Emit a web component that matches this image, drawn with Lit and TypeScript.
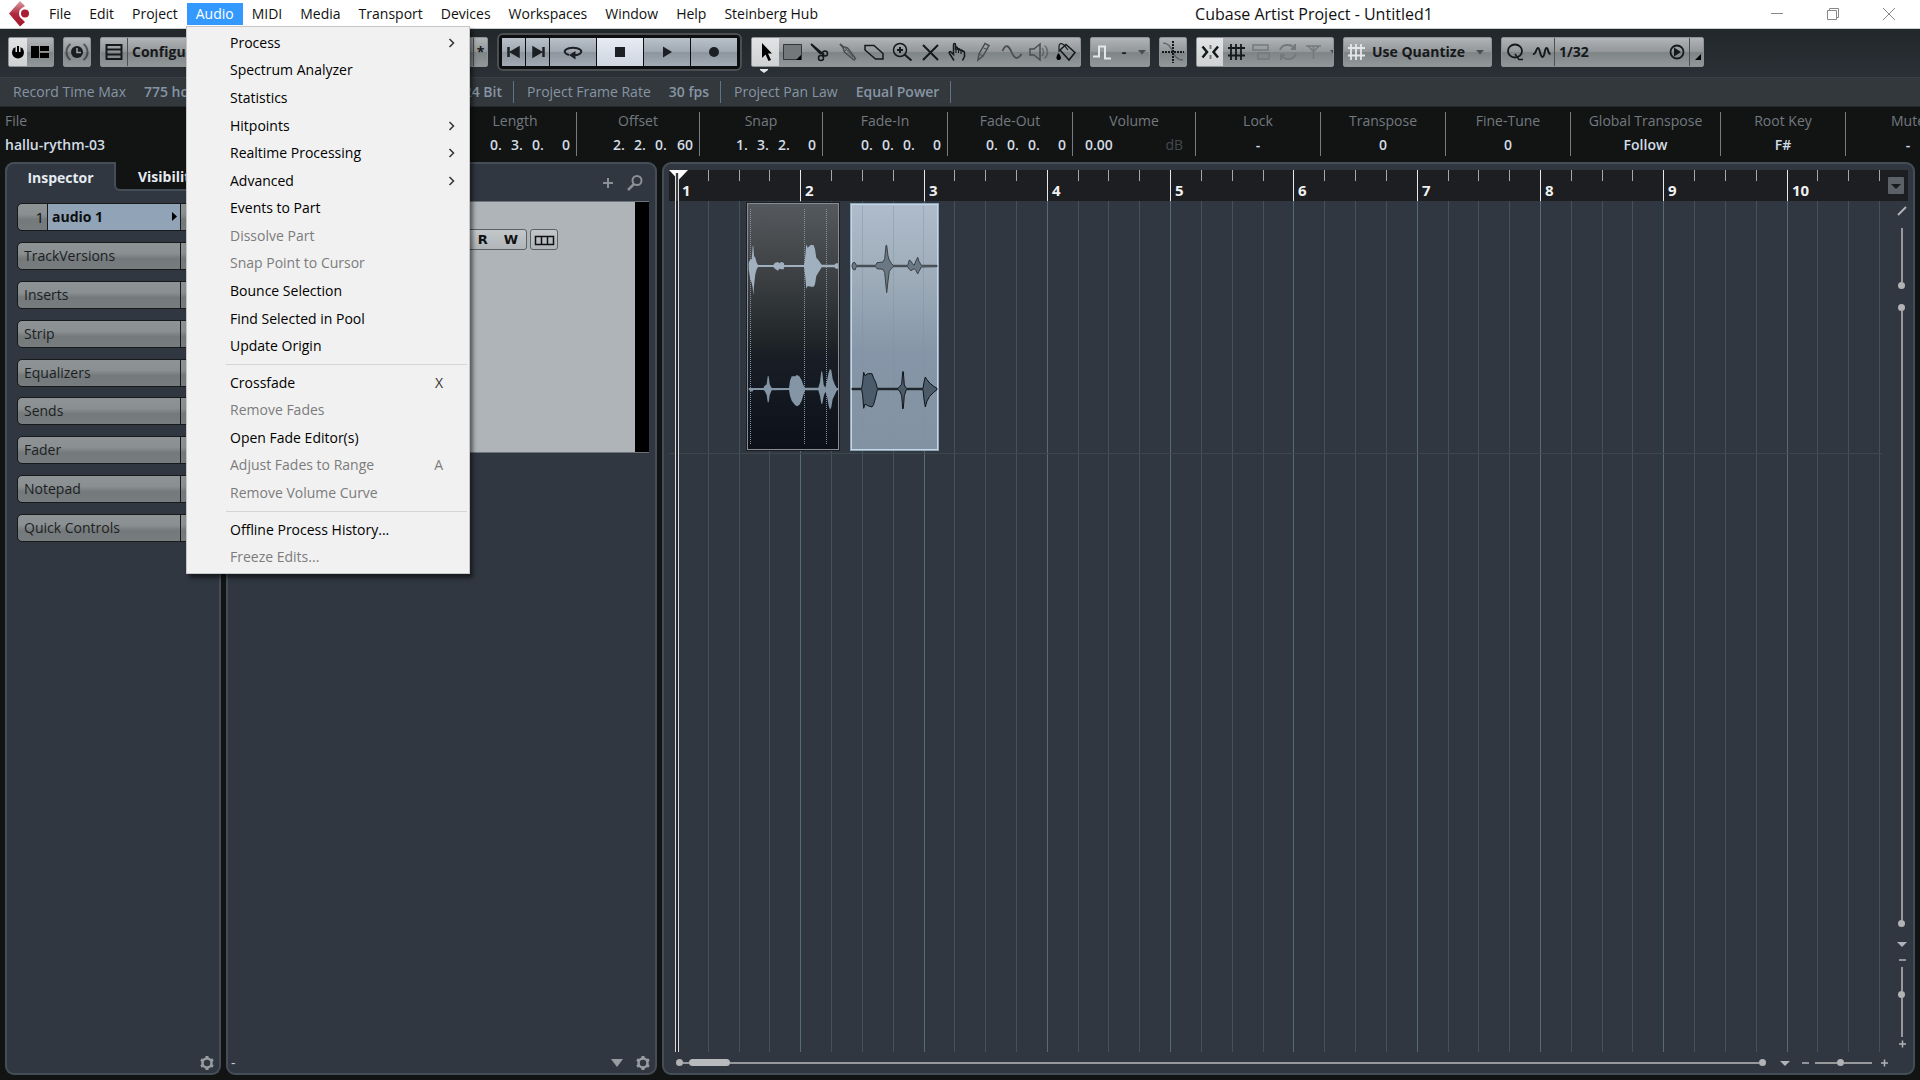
import { LitElement, html, svg, css, nothing } from "lit";
import { customElement } from "lit/decorators.js";
import { classMap } from "lit/directives/class-map.js";

const menus = ["File", "Edit", "Project", "Audio", "MIDI", "Media", "Transport", "Devices", "Workspaces", "Window", "Help", "Steinberg Hub"];

type Entry = { label: string; sub?: boolean; off?: boolean; key?: string } | null;
const audioMenu: Entry[] = [
  { label: "Process", sub: true },
  { label: "Spectrum Analyzer" },
  { label: "Statistics" },
  { label: "Hitpoints", sub: true },
  { label: "Realtime Processing", sub: true },
  { label: "Advanced", sub: true },
  { label: "Events to Part" },
  { label: "Dissolve Part", off: true },
  { label: "Snap Point to Cursor", off: true },
  { label: "Bounce Selection" },
  { label: "Find Selected in Pool" },
  { label: "Update Origin" },
  null,
  { label: "Crossfade", key: "X" },
  { label: "Remove Fades", off: true },
  { label: "Open Fade Editor(s)" },
  { label: "Adjust Fades to Range", key: "A", off: true },
  { label: "Remove Volume Curve", off: true },
  null,
  { label: "Offline Process History..." },
  { label: "Freeze Edits...", off: true },
];

const icon = (body: unknown, w = 24, h = 24) =>
  html`<svg class="ico" width=${w} height=${h} viewBox="0 0 ${w} ${h}" fill="none" stroke="currentColor" stroke-width="1.5" aria-hidden="true">${body}</svg>`;

const I = {
  power: svg`<circle cx="12" cy="12.500" r="6" fill="#000" stroke="none"/><path d="M12 5v7" stroke="#dcdddd" stroke-width="5"/><path d="M12 6v7" stroke="#000" stroke-width="2"/>`,
  layout: svg`<path d="M3 6h8v12H3zM12 6h9v5h-9zM12 13h9v5h-9z" fill="#000" stroke="none"/>`,
  clock: svg`<circle cx="12" cy="12" r="6" fill="#1a1d1f" stroke="none"/><path d="M12 8v4.500h4" stroke="#a2a6a9"/><path d="M5.500 4a10 10 0 0 0 0 16M18.500 4a10 10 0 0 1 0 16" stroke-width="2" opacity=".55"/>`,
  list: svg`<path d="M4.500 5h15v14h-15zM5 9.500h14M5 14.500h14" stroke-width="2"/>`,
  prev: svg`<path d="M6 7v10M7 7v10"/><path d="M17 7v10L8.500 12z" fill="currentColor"/>`,
  next: svg`<path d="M17 7v10M18 7v10"/><path d="M7 7v10l8.500-5z" fill="currentColor"/>`,
  cycle: svg`<path d="M8 15c-4-1-5.500-3.500-3-5.500 3-2.500 11-2.500 14 0 2.500 2 1 4.500-3 5.500h-3" stroke-width="2"/><path d="M14.500 11v8.500L8 15z" fill="currentColor" stroke="none"/>`,
  stop: svg`<path d="M7 7h10v10H7z" fill="currentColor" stroke="none"/>`,
  play: svg`<path d="M8 6.500v11l9-5.500z" fill="currentColor" stroke="none"/>`,
  rec: svg`<circle cx="12" cy="12" r="5" fill="currentColor" stroke="none"/>`,
  arrow: svg`<path d="M8 3v15l3.500-3.500 3 6.500 2.500-1-3-6.500h4z" fill="#000" stroke="none"/>`,
  range: svg`<path d="M2.500 4.500h18v15h-18z" fill="#73787b" stroke="#33373a" stroke-width="1"/><path d="M20 15v5h-5z" fill="#000" stroke="none"/>`,
  scissors: svg`<path d="M3 4l13 11M4 5l9 9" stroke-width="2"/><circle cx="17" cy="13.500" r="2.500"/><circle cx="13" cy="18" r="2.500"/>`,
  glue: svg`<path d="M4 4l3 3" stroke-width="2"/><path d="M6.500 6.500l5 1.500 8 10.500-1.500 1.500-9.500-8z"/><path d="M8 12l4-4M9 8l8 9" stroke-width="1"/>`,
  eraser: svg`<path d="M2 5.500h9l9 8v5.500h-7.500L2 10z"/>`,
  zoom: svg`<circle cx="10" cy="10" r="6.500"/><path d="M10 7v6M7 10h6M14.500 14.500l7 6" stroke-width="2"/>`,
  mute: svg`<path d="M5 5l15 15M20 5L5 20" stroke-width="2"/>`,
  hand: svg`<path d="M9 20.500l-4.500-7c-1-1.500.5-2.500 1.500-1.500l2.500 2.500V5c0-2 2-2 2 0v5-2c0-1.500 2-1.500 2 0v2c0-2 2.500-1.500 2.500 0v1c0-1.500 2.500-1.500 2.500 0v1c0-1.500 2-1 2 .5v4l-2 4"/><path d="M11 7v6M13.500 9v4M16 10v4" stroke-width="1.200"/>`,
  pencil: svg`<path d="M6 20l1-6 6-10.500 4 2L11 16z"/><path d="M7.500 14l3.500 2M11.500 8l4 1.500" stroke-width="1"/>`,
  line: svg`<path d="M2.500 11c3-7 6-6 9 1 3 7 6 8 10 2" stroke-width="1.800"/>`,
  speaker: svg`<path d="M3 9h4l6-5v16l-6-5H3z"/><path d="M15 8c2 2 2 6 0 8M17.500 5.500c4 3 4 10 0 13" opacity=".6"/>`,
  bucket: svg`<path d="M6 10L12 4.500l9 8L15 20z"/><path d="M5 12V6c0-3 3-3 5-1l4 5" stroke-width="1.200"/><path d="M4.500 13c4 5 2.500 7 0 7s-3-3 0-7z" fill="#000" stroke="none"/>`,
  step: svg`<path d="M2 16.500h6v-10h6v12h6" stroke="#e4e6e8" stroke-width="2"/>`,
  caret: svg`<path d="M3 4h8L7 8.500z" fill="currentColor" stroke="none"/>`,
  auto: svg`<path d="M2 3c11 0 8 17 20 17" opacity=".7"/><path d="M12 1v22M1 12h22" stroke="#16191b" stroke-width="2" stroke-dasharray="2 1"/>`,
  snap: svg`<path d="M4.500 6.500L9 12l-4.500 5.500M20 6.500L15.500 12l4.500 5.500" stroke-width="2.500"/><path d="M12.500 5v4M12.500 15v4" stroke-width="2" opacity=".5"/>`,
  hash: svg`<path d="M7 4v16M12 4v16M17 4v16M4 8h17M4 15.500h17" stroke-width="1.800"/>`,
  relative: svg`<path d="M3 5h15v5H3zM8 13h11v6H8z"/>`,
  sync: svg`<path d="M4 10c2-6 11-7 15-1M20 14c-3 6-11 7-15 1M19 4v5h-4M5 20v-5h4" stroke-width="2"/>`,
  tee: svg`<path d="M4 6h15M11.500 6v13M6 6l5.500 5.500L17 6" stroke-width="1.500"/>`,
  qq: svg`<ellipse cx="12" cy="11" rx="7" ry="6.500" stroke-width="1.800"/><path d="M12 14l4 5.500h4" stroke-width="1.500"/>`,
  wave: svg`<path d="M4 14c3 1 3-6 5-6s2 9 4.500 9 2-9 4-9 1 6 4 6" stroke-width="2"/>`,
  iter: svg`<circle cx="12" cy="12" r="6.500" stroke-width="1.800"/><path d="M9 7.500v9l7-4.500z" fill="currentColor" stroke="none"/>`,
  corner: svg`<path d="M10 10v6H4z" fill="#000" stroke="none"/>`,
  plus: svg`<path d="M12 7v10M7 12h10" stroke-width="2"/>`,
  find: svg`<circle cx="14" cy="9.500" r="4.500" stroke-width="2"/><path d="M11 13l-6 6" stroke-width="2.500"/>`,
  gear: svg`<circle cx="12" cy="12" r="4.500" stroke-width="2.500"/><path d="M12 5V7.500M12 16.500V19M6 8.500l2.500 1.500M15.500 14l2.500 1.500M6 15.500L8.500 14M15.500 10L18 8.500" stroke-width="3"/>`,
  lanes: svg`<path d="M3.500 8.500h18v8h-18zM9.500 8.500v8M15.500 8.500v8" stroke-width="1.500"/>`,
};

const tools: [string, unknown][] = [
  ["Object Selection", I.arrow], ["Range Selection", I.range], ["Split", I.scissors], ["Glue", I.glue],
  ["Erase", I.eraser], ["Zoom", I.zoom], ["Mute", I.mute], ["Time Warp", I.hand], ["Draw", I.pencil],
  ["Line", I.line], ["Play", I.speaker], ["Color", I.bucket],
];
const softTools = new Set(["Draw", "Line", "Play", "Glue"]);

const info: { label: string; value: string; kind?: string; parts?: string[]; unit?: string }[] = [
  { label: "Length", value: "", kind: "narrow", parts: ["0.", "3.", "0.", "0"] },
  { label: "Offset", value: "", kind: "narrow", parts: ["2.", "2.", "0.", "60"] },
  { label: "Snap", value: "", kind: "narrow", parts: ["1.", "3.", "2.", "0"] },
  { label: "Fade-In", value: "", parts: ["0.", "0.", "0.", "0"] },
  { label: "Fade-Out", value: "", parts: ["0.", "0.", "0.", "0"] },
  { label: "Volume", value: "0.00", unit: "dB", kind: "narrow" },
  { label: "Lock", value: "-" },
  { label: "Transpose", value: "0" },
  { label: "Fine-Tune", value: "0" },
  { label: "Global Transpose", value: "Follow", kind: "wide" },
  { label: "Root Key", value: "F#" },
  { label: "Mute", value: "-" },
];

const sections = ["TrackVersions", "Inserts", "Strip", "Equalizers", "Sends", "Fader", "Notepad", "Quick Controls"];

const ORIGIN = 9;
const BEAT = 30.82;
const beats = Array.from({ length: 39 }, (_, i) => i + 1);
const beatX = (n: number) => Math.round(ORIGIN + n * BEAT);

// Peak envelopes in thirds of a pixel: [x from the clip start, peak above, peak below].
type Peak = [number, number, number];
const darkLeft: Peak[] = [[5, 10, 10], [10, 20, 40], [14, 20, 50], [17, 60, 65], [19, 60, 88], [21, 30, 60], [25, 25, 25], [29, 10, 10], [33, 3, 3], [79, 3, 3], [84, 10, 8], [93, 12, 14], [97, 8, 8], [103, 12, 10], [110, 10, 10], [112, 3, 3], [171, 3, 3], [174, 20, 25], [178, 65, 68], [182, 55, 60], [192, 64, 62], [200, 62, 62], [204, 50, 55], [208, 25, 30], [214, 18, 20], [224, 4, 4], [262, 4, 4], [267, 8, 8], [273, 8, 8]];
const darkRight: Peak[] = [[5, 3, 3], [16, 3, 8], [19, 3, 3], [49, 3, 3], [53, 10, 6], [59, 14, 18], [62, 38, 40], [65, 38, 40], [68, 14, 18], [74, 3, 4], [126, 3, 3], [129, 25, 20], [134, 38, 35], [144, 38, 48], [150, 42, 52], [157, 38, 48], [164, 26, 35], [169, 12, 18], [174, 4, 4], [214, 4, 4], [219, 20, 20], [223, 54, 44], [226, 50, 44], [230, 12, 22], [235, 4, 8], [240, 25, 22], [245, 50, 50], [249, 60, 62], [253, 56, 55], [257, 30, 30], [263, 14, 18], [269, 3, 5], [273, 3, 3]];
const lightLeft: Peak[] = [[6, 2, 2], [9, 10, 10], [15, 10, 12], [19, 2, 2], [77, 2, 2], [81, 10, 8], [99, 12, 10], [104, 22, 20], [108, 62, 60], [110, 62, 80], [114, 30, 45], [118, 18, 16], [124, 8, 8], [129, 2, 2], [173, 2, 2], [178, 18, 10], [183, 14, 14], [189, 4, 10], [193, 3, 8], [198, 16, 14], [203, 26, 24], [207, 14, 16], [214, 2, 3], [261, 2, 2]];
const lightRight: Peak[] = [[6, 2, 2], [35, 2, 2], [38, 20, 20], [41, 50, 58], [45, 40, 45], [53, 46, 50], [66, 46, 54], [71, 32, 46], [77, 20, 24], [82, 2, 2], [144, 2, 2], [149, 8, 6], [155, 14, 20], [158, 52, 60], [160, 52, 58], [163, 12, 20], [169, 2, 2], [219, 2, 2], [222, 20, 30], [226, 36, 54], [231, 28, 36], [239, 18, 22], [251, 8, 10], [261, 2, 2]];
const envelope = (peaks: Peak[], left: number, mid: number) => {
  const top = peaks.map(([x, up]) => `${(left + x / 3).toFixed(1)} ${(mid - up / 3).toFixed(1)}`);
  const low = [...peaks].reverse().map(([x, , down]) => `${(left + x / 3).toFixed(1)} ${(mid + down / 3).toFixed(1)}`);
  return `M${[...top, ...low].join("L")}Z`;
};

@customElement("app-root")
export class AppRoot extends LitElement {
  static styles = css`
    :host {
      display: flex;
      flex-direction: column;
      height: 100vh;
      overflow: hidden;
      position: relative;
      background: #121414;
      color: #dfe6ec;
      font: 14px/20px "Open Sans", "Noto Sans", sans-serif;
    }
    * { box-sizing: border-box; }
    button { font: inherit; color: inherit; border: 0; background: none; padding: 0; margin: 0; display: flex; align-items: center; justify-content: center; }
    .ico { flex: none; display: block; }

    .title { display: flex; height: 29px; background: #fff; color: #111; border-bottom: 1px solid #c9cdcf; align-items: center; flex: none; }
    .logo { margin: 0 10px 0 8px; flex: none; }
    .menus { display: flex; }
    .menus button { height: 22px; padding: 0 9px; white-space: nowrap; }
    .menus .open { background: #3399ff; color: #fff; }
    .caption { flex: 1; text-align: center; padding-left: 52px; font-size: 16px; }
    .win { display: flex; color: #888; padding-right: 3px; }
    .win button { width: 56px; height: 28px; }

    .toolbar { display: flex; align-items: center; height: 48px; padding: 0 8px 2px 8px; gap: 9px; background: linear-gradient(#22272a, #2b3036); flex: none; }
    .grp { display: flex; align-items: center; height: 30px; border-radius: 2px; color: #16191b; background: linear-gradient(#b0b4b7, #94989b 48%, #7f8487 52%, #92979a); border: 1px solid #8d9295; font-weight: 700; flex: none; overflow: hidden; }
    .grp button { flex: none; width: 26px; height: 28px; }
    .grp .on { background: linear-gradient(#e2e3e4, #cfd1d2); }
    .grp .cut { border-left: 1px solid #4c5053; }
    .grp .slim { width: 18px; }
    .grp .star { width: 14px; }
    .grp .fill { flex: 1; padding: 0 4px; justify-content: space-between; width: auto; }
    .grp .tight { padding: 0; }
    .faint { color: #74797c; }
    .softer { color: #4a4e51; }
    .white { color: #e4e6e8; }
    .config { width: 388px; }
    .transport { display: flex; gap: 1px; height: 38px; padding: 3px; border: 2px solid #4b4f52; border-radius: 6px; background: #0c0e0f; flex: none; color: #1c2024; }
    .transport button { width: 46px; height: 28px; background: linear-gradient(#b9c1ca, #a0a8b2 48%, #8d959e 52%, #a2abb5); }
    .transport .half { width: 23px; }
    .transport .on { background: linear-gradient(#e6ebf4, #cfd6e0); }
    .toolwrap { position: relative; flex: none; }
    .tools { width: 330px; }
    .tools button { flex: 1; }
    .mark { position: absolute; left: 8px; top: 32px; }
    .curve { width: 60px; }
    .snapgrp { width: 138px; }
    .usequant { width: 149px; }
    .quant { width: 203px; }

    .status { display: flex; align-items: center; height: 30px; background: #33383c; border-top: 1px solid #3a4044; border-bottom: 1px solid #24282b; color: #8695a5; padding: 0 13px; gap: 13px; flex: none; white-space: nowrap; }
    .status b { font-weight: 600; }
    .status .pair { width: 194px; display: flex; gap: 18px; padding-right: 11px; border-right: 1px solid #5e7386; line-height: 22px; flex: none; }
    .status .wide { width: 217px; }
    .status .first { width: 501px; }
    .status .end { margin-left: auto; }

    .info { display: flex; height: 55px; padding: 5px 0 6px 0; overflow: hidden; flex: none; white-space: nowrap; background: #121414; }
    .info .cell { width: 125px; flex: none; border-right: 1px solid #767c81; text-align: center; display: flex; flex-direction: column; justify-content: space-between; line-height: 18px; padding-bottom: 2px; }
    .info .narrow { width: 123px; }
    .info .wide { width: 150px; }
    .info .file { width: 454px; border: 0; text-align: left; padding-left: 5px; }
    .info .lab { color: #72797f; }
    .info b { font-weight: 600; color: #d3dce4; }
    .info .parts { display: grid; grid-template-columns: 21px 21px 21px 17px; justify-content: end; text-align: left; padding-right: 6px; }
    .info .parts b:last-child { text-align: right; }
    .info .split { display: flex; justify-content: space-between; padding: 0 12px; }
    .info .unit { color: #44494d; }

    .work { flex: 1; display: flex; gap: 5px; padding: 0 5px 5px 5px; min-height: 0; }
    .panel { background: #303740; border: 2px solid #454d57; border-radius: 9px; display: flex; flex-direction: column; min-height: 0; min-width: 0; }
    .foot { margin-top: auto; height: 20px; display: flex; align-items: center; justify-content: flex-end; color: #989da2; padding: 0 0 0 3px; gap: 2px; flex: none; }
    .foot .dash { margin-right: auto; color: #ccc; }

    .inspector { width: 216px; flex: none; border-top: 0; }
    .tabs { display: flex; height: 29px; font-weight: 700; color: #e6ebf0; margin: 0 -2px; flex: none; }
    .tabs button { width: 109px; border: 2px solid #454d57; border-bottom: 0; border-radius: 9px 0 0 0; height: 29px; }
    .tabs .rest { flex: 1; background: #121414; border: 0; border-left: 2px solid #454d57; border-bottom: 2px solid #454d57; border-radius: 0 0 0 6px; justify-content: flex-start; padding: 3px 0 0 22px; }
    .tabs .active { border-right: 0; }
    .sections { display: flex; flex-direction: column; justify-content: space-between; height: 339px; margin: 12px 10px 0 10px; flex: none; }
    .sections button { height: 28px; border: 1px solid #17191b; border-radius: 5px; color: #1c1f21; background: linear-gradient(#8e9396, #8a8f92 40%, #74797c 60%, #777c7f); padding-left: 6px; justify-content: flex-start; }
    .sections .lbl { width: 157px; height: 100%; border-right: 1px solid #17191b; display: flex; align-items: center; }
    .sections .track { padding: 0; font-weight: 700; color: #0c0e10; }
    .sections .num { width: 29px; padding-right: 3px; text-align: right; font-weight: 400; }
    .sections .name { width: 134px; height: 100%; background: #91a3b7; border: 1px solid #17191b; border-width: 0 1px; padding: 0 2px 0 4px; display: flex; align-items: center; justify-content: space-between; }

    .tracks { width: 431px; flex: none; }
    .thead { display: flex; align-items: center; justify-content: flex-end; gap: 3px; height: 37px; padding-right: 8px; color: #8b9095; flex: none; }
    .row { display: flex; height: 252px; border: 1px solid #6d747a; border-width: 1px 0; margin-right: 6px; background: #afb4b8; flex: none; }
    .meter { width: 14px; background: #000; margin-left: auto; }
    .rw { display: flex; gap: 3px; padding: 27px 0 0 230px; color: #111; }
    .rw button { height: 21px; border: 1px solid #5c6165; border-radius: 3px; background: linear-gradient(#c3c7ca, #b0b5b9); width: 28px; }
    .rw .pair { width: 69px; justify-content: flex-end; gap: 16px; padding-right: 8px; font: 900 13px/18px "DejaVu Sans", sans-serif; }

    .arrange { flex: 1; padding: 6px 5px 0 5px; }
    .area { flex: 1; display: grid; grid-template-columns: 1fr 26px; grid-template-rows: 31px 1fr 21px; min-height: 0; }
    .ruler { background: #1d1e21; overflow: hidden; min-width: 0; }
    .ruler svg, .canvas svg { display: block; }
    .rulerbtn { background: #1d1e21; }
    .rulerbtn button { background: #5b6166; color: #17191b; width: 16px; height: 17px; margin: 7px 0 0 6px; border-radius: 1px; }
    .canvas { overflow: hidden; min-height: 0; min-width: 0; }
    .num { font: 700 15px "Open Sans", sans-serif; }
    .vbar { min-height: 0; display: flex; flex-direction: column; align-items: center; color: #b0b4b8; padding: 0 0 22px 13px; grid-row: 2 / 4; grid-column: 2; }
    .hbar { display: flex; align-items: center; color: #b0b4b8; grid-row: 3; grid-column: 1 / 3; padding: 0 18px 0 7px; }
    .dot { width: 7px; height: 7px; border-radius: 4px; background: #b3b3b6; flex: none; }
    .wire { background: #98999d; flex: none; }
    .hbar .wire { height: 2px; }
    .vbar .wire { width: 2px; }
    .hbar .long, .vbar .long { flex: 1; }
    .thumb { width: 41px; height: 7px; border-radius: 4px; background: #b9babd; flex: none; }

    .popup { position: absolute; left: 186px; top: 26px; width: 284px; height: 548px; background: #f1f1f1; border: 1px solid #c6c6c6; box-shadow: 3px 4px 4px rgba(0, 0, 0, .5); color: #000; padding: 2px 3px; display: flex; flex-direction: column; }
    .popup button { flex: 1; justify-content: space-between; padding: 0 10px 0 40px; }
    .popup .key { padding-right: 13px; color: #333; }
    .popup .off, .popup .off .key { color: #7c7c7c; }
    .popup hr { border: 0; border-top: 1px solid #d4d4d4; margin: 4px 0 4px 36px; width: 241px; }
  `;

  private tool(label: string, body: unknown, cls = "") {
    return html`<button class=${cls} aria-label=${label}>${icon(body)}</button>`;
  }

  private ruler() {
    return html`<svg width="100%" height="31" aria-hidden="true">
      ${beats.map((n) => {
        const x = beatX(n);
        return n % 4 === 0
          ? svg`<rect x=${x - 1} y="0" width="1" height="31" fill="#e8e8e8"/><text class="num" x=${x + 4} y="26" fill="#f0f0f0">${n / 4 + 1}</text>`
          : svg`<rect x=${x - 1} y="0" width="1" height="11" fill="#a5a7a9"/>`;
      })}
      <path d="M0 0h19L9.500 10z" fill="#fff"/>
      <path d="M8 3v28" stroke="#3a3d40" stroke-width="2"/>
      <path d="M6.500 3v28M9.500 3v28" stroke="#dedede"/>
      <text class="num" x="13" y="26" fill="#f0f0f0">1</text>
    </svg>`;
  }

  private canvas() {
    return html`<svg width="100%" height="851" aria-label="Arrangement">
      <defs>
        <linearGradient id="dark" x2="0" y2="1"><stop offset="0" stop-color="#56595d"/><stop offset=".3" stop-color="#3c4042"/><stop offset=".57" stop-color="#1f2427"/><stop offset=".62" stop-color="#191e26"/><stop offset="1" stop-color="#0c1119"/></linearGradient>
        <linearGradient id="light" x2="0" y2="1"><stop offset="0" stop-color="#afbccb"/><stop offset=".3" stop-color="#9eacb9"/><stop offset=".6" stop-color="#8696a8"/><stop offset="1" stop-color="#8292a2"/></linearGradient>
      </defs>
      ${beats.map((n) => svg`<rect x=${beatX(n) - 1} y="0" width="1" height="851" fill=${n % 4 ? "#44525d" : "#566a78"}/>`)}
      <rect x="0" y="252" width="100%" height="1" fill="#3c464d"/>
      <rect x="77.500" y="1.500" width="93" height="248" fill="url(#dark)" stroke="#1a1e22"/>
      <rect x="78.500" y="2.500" width="91" height="246" fill="none" stroke="#888d91"/>
      <path d="M81.500 8v236M135.500 8v236M157.500 8v236" stroke="#7d93a8" stroke-dasharray="1 1"/>
      <path d=${envelope(darkLeft, 78, 65)} fill="#a1b0bf"/>
      <path d=${envelope(darkRight, 78, 188)} fill="#8496a6"/>
      <rect x="181.500" y="2.500" width="88" height="247" fill="url(#light)" stroke="#8fa6b8"/>
      <rect x="182.500" y="3.500" width="86" height="245" fill="none" stroke="#c4d7e6"/>
      <path d="M193.500 5v242M224.500 5v242M254.500 5v242" stroke="#7d90a2" opacity=".4"/>
      <path d=${envelope(lightLeft, 181, 65)} fill="#6a7885" stroke="#3c4145"/>
      <path d=${envelope(lightRight, 181, 188)} fill="#4b5b69" stroke="#11151a"/>
      <path d="M8 0v851" stroke="#22262b" stroke-width="2"/>
      <path d="M6.500 0v851M9.500 0v851" stroke="#dcdcdc"/>
    </svg>`;
  }

  render() {
    return html`
      <header class="title">
        <svg class="logo" width="22" height="26" viewBox="0 0 22 26" aria-label="Cubase">
          <defs><linearGradient id="lg" x2="0" y2="1"><stop offset="0" stop-color="#dca0a8"/><stop offset=".5" stop-color="#b02b3e"/><stop offset="1" stop-color="#a3152c"/></linearGradient></defs>
          <path d="M12 0l5 5-3 2a6.500 6.500 0 0 0 0 11l3 3-5 4.500L1 12.500z" fill="url(#lg)"/><circle cx="17" cy="12.500" r="4" fill="#a81f33"/>
        </svg>
        <nav class="menus">${menus.map((m) => html`<button class=${classMap({ open: m === "Audio" })}>${m}</button>`)}</nav>
        <div class="caption">Cubase Artist Project - Untitled1</div>
        <div class="win">
          <button aria-label="Minimize">${icon(svg`<path d="M6 11.500h12" stroke-width="1"/>`)}</button>
          <button aria-label="Restore">${icon(svg`<path d="M6.500 8.500h9v9h-9zM8.500 8.500v-2h9v9h-2" stroke-width="1"/>`)}</button>
          <button aria-label="Close">${icon(svg`<path d="M6 6l12 12M18 6L6 18" stroke-width="1"/>`)}</button>
        </div>
      </header>

      <div class="toolbar">
        <div class="grp">${this.tool("Activate Project", I.power, "on slim")}${this.tool("Window Layout", I.layout)}</div>
        <div class="grp">${this.tool("Delay Compensation", I.clock)}</div>
        <div class="grp config">${this.tool("Configuration", I.list)}<button class="cut fill">Configurations</button><button class="cut star" aria-label="Modified">*</button></div>
        <div class="transport">
          ${this.tool("Previous Marker", I.prev, "half")}${this.tool("Next Marker", I.next, "half")}${this.tool("Cycle", I.cycle)}${this.tool("Stop", I.stop, "on")}${this.tool("Start", I.play)}${this.tool("Record", I.rec)}
        </div>
        <div class="toolwrap">
          <div class="grp tools">${tools.map(([l, b], i) => this.tool(l, b, i === 0 ? "on" : softTools.has(l) ? "softer" : ""))}</div>
          <svg class="mark" width="10" height="5" aria-hidden="true"><path d="M1 0h8v1L5 4 1 1z" fill="#e4e6e8"/></svg>
        </div>
        <div class="grp curve"><button class="fill tight" aria-label="Color Menu">${icon(I.step, 22)}<span>-</span><span class="softer">${icon(I.caret, 14, 12)}</span></button></div>
        <div class="grp">${this.tool("Auto Scroll", I.auto, "softer")}</div>
        <div class="grp snapgrp">${this.tool("Snap", I.snap, "on")}${this.tool("Grid", I.hash)}${this.tool("Grid Relative", I.relative, "faint")}${this.tool("Events", I.sync, "faint")}${this.tool("Cursor", I.tee, "faint")}<span class="softer">${icon(I.caret, 14, 12)}</span></div>
        <div class="grp usequant"><span class="white">${icon(I.hash)}</span><button class="fill">Use Quantize <span class="softer">${icon(I.caret, 14, 12)}</span></button></div>
        <div class="grp quant">${this.tool("Apply Quantize", I.qq)}${this.tool("Soft Quantize", I.wave)}<button class="cut fill">1/32 ${icon(I.iter, 20)}</button><button class="cut star" aria-label="Open Quantize Panel">${icon(I.corner, 12, 16)}</button></div>
      </div>

      <div class="status">
        <div class="pair first"><span>Record Time Max</span><b>775 hours</b><b class="end">24 Bit</b></div>
        <div class="pair"><span>Project Frame Rate</span><b class="end">30 fps</b></div>
        <div class="pair wide"><span>Project Pan Law</span><b class="end">Equal Power</b></div>
      </div>

      <div class="info">
        <div class="cell file"><span class="lab">File</span><b>hallu-rythm-03</b></div>
        ${info.map((c) => html`<div class="cell ${c.kind ?? ""}"><span class="lab">${c.label}</span>${c.parts
          ? html`<span class="parts">${c.parts.map((p) => html`<b>${p}</b>`)}</span>`
          : c.unit ? html`<span class="split"><b>${c.value}</b><span class="unit">${c.unit}</span></span>` : html`<b>${c.value}</b>`}</div>`)}
      </div>

      <main class="work">
        <section class="panel inspector">
          <div class="tabs"><button class="active">Inspector</button><button class="rest">Visibility</button></div>
          <div class="sections">
            <button class="track"><span class="num">1</span><span class="name">audio 1 <svg width="6" height="10" aria-hidden="true"><path d="M0 0v9l5-4.500z"/></svg></span></button>
            ${sections.map((s) => html`<button><span class="lbl">${s}</span></button>`)}
          </div>
          <div class="foot"><button aria-label="Inspector Setup">${icon(I.gear)}</button></div>
        </section>

        <section class="panel tracks">
          <div class="thead"><button aria-label="Add Track">${icon(I.plus)}</button><button aria-label="Find Tracks">${icon(I.find)}</button></div>
          <div class="row">
            <div class="rw"><button class="pair"><span>R</span><span>W</span></button><button aria-label="Show Lanes">${icon(I.lanes)}</button></div>
            <div class="meter"></div>
          </div>
          <div class="foot"><span class="dash">-</span><button aria-label="Track Filter">${icon(svg`<path d="M6 8h12l-6 8z" fill="currentColor" stroke="none"/>`)}</button><button aria-label="Track Controls Setup">${icon(I.gear)}</button></div>
        </section>

        <section class="panel arrange">
          <div class="area">
            <div class="ruler">${this.ruler()}</div>
            <div class="rulerbtn"><button aria-label="Ruler Display">${icon(svg`<path d="M3 6h10l-5 5z" fill="currentColor" stroke="none"/>`, 16, 16)}</button></div>
            <div class="canvas">${this.canvas()}</div>
            <div class="vbar">
              ${icon(svg`<path d="M3 14l8-8" stroke-width="2"/>`, 14, 27)}
              <i class="wire" style="height:54px"></i><i class="dot"></i>
              <svg width="14" height="15" aria-hidden="true"></svg>
              <i class="dot"></i><i class="wire long"></i><i class="dot"></i>
              ${icon(svg`<path d="M2 15h10l-5 5z" fill="currentColor" stroke="none"/>`, 14, 26)}
              ${icon(svg`<path d="M4 7h7"/>`, 14, 14)}
              <i class="wire" style="height:24px"></i><i class="dot"></i><i class="wire" style="height:39px"></i>
              ${icon(svg`<path d="M4 7h7M7.500 3.500v7"/>`, 14, 14)}
            </div>
            <div class="hbar">
              <i class="dot"></i><i class="wire" style="width:6px"></i><i class="thumb"></i><i class="wire long"></i><i class="dot"></i>
              ${icon(svg`<path d="M14 5h10l-5 5z" fill="currentColor" stroke="none"/>`, 30, 14)}
              ${icon(svg`<path d="M6 7h7"/>`, 19, 14)}
              <i class="wire" style="width:22px"></i><i class="dot"></i><i class="wire" style="width:28px"></i>
              ${icon(svg`<path d="M9 7h7M12.500 3.500v7"/>`, 18, 14)}
            </div>
          </div>
        </section>
      </main>

      <div class="popup" role="menu">
        ${audioMenu.map((e) => e === null ? html`<hr>` : html`<button role="menuitem" class=${classMap({ off: !!e.off })}><span>${e.label}</span>${e.key ? html`<span class="key">${e.key}</span>` : e.sub ? html`<svg width="8" height="10" fill="none" stroke="#333" stroke-width="1.500" aria-hidden="true"><path d="M1.500 1l4 4-4 4"/></svg>` : nothing}</button>`)}
      </div>
    `;
  }
}
